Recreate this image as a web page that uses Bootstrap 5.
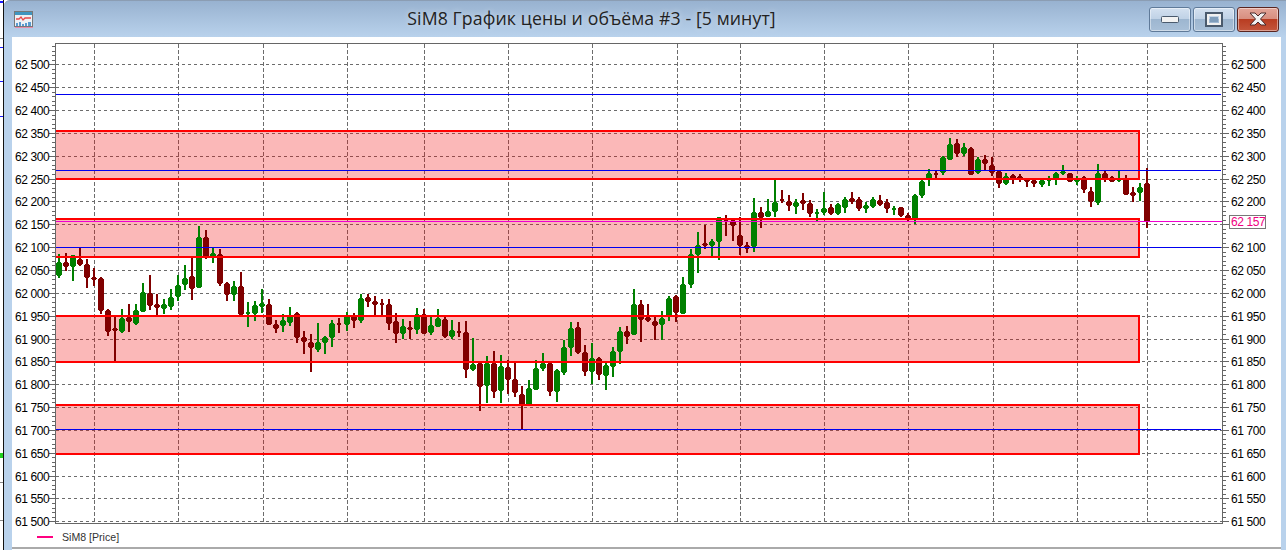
<!doctype html>
<html lang="ru">
<head>
<meta charset="utf-8">
<title>SiM8 График цены и объёма #3</title>
<link href="https://cdn.jsdelivr.net/npm/bootstrap@5.3.0/dist/css/bootstrap.min.css" rel="stylesheet">
<style>
html,body{height:550px;overflow:hidden;background:#fff}
.desk-strip{width:4px;flex:none;background:#fff;border-right:1px solid #111}
.desk-strip svg{display:block}
.win-frame{flex:1 1 auto;min-width:0;height:550px;background:#b9d2ec;border-top-left-radius:6px;padding:0 5px 0 8px}
.win-title{height:37px;margin:0 -5px 0 -8px;padding:0 7px 0 10px;background:linear-gradient(#98b2d0,#b9d2ec);border-top:1px solid #8b9db3;border-top-left-radius:6px}
.win-icon{width:20px;height:18px;flex:none;display:block;margin-top:2px}
.win-caption{font:17.7px/1 "Open Sans",sans-serif;color:#222;letter-spacing:.1px;margin-top:-1px;text-shadow:0 0 6px rgba(255,255,255,.55)}
.win-btns{gap:2px}
.win-btn{width:42px;height:25px;padding:0;border:1px solid #5f7a99;border-radius:3px;display:flex;align-items:center;justify-content:center;background:linear-gradient(#d4e1f0 0,#c0d2e6 46%,#9db6d0 50%,#a9c0d8 100%);box-shadow:inset 0 0 0 1px rgba(255,255,255,.45)}
.win-btn-close{border-color:#5a2520;background:linear-gradient(#e3a69a 0,#d88f80 46%,#b93d22 50%,#c4563c 100%)}
.win-btn svg{display:block}
.win-client{background:#fff;height:513px}
.plot-svg{display:block;width:1269px;height:490px}
.plot-svg rect,.plot-svg line,.plot-svg path{shape-rendering:crispEdges}
.axis-text{font:12px "Liberation Sans",sans-serif;letter-spacing:-.42px;fill:#000}
.price-text{font:12px "Liberation Sans",sans-serif;letter-spacing:-.42px;fill:#f0007f}
.legend-row{height:20px;padding-left:25px;font:10.6px "Liberation Sans",sans-serif;color:#333}
.legend-swatch{width:16px;height:2px;background:#ff0080;margin-right:9px}
.legend-end{height:3px;border-top:2px solid #aaa}
</style>
</head>
<body class="d-flex">
<div class="desk-strip">
<svg width="3" height="550"><rect width="3" height="2" y="1" fill="#1a1aff"/><rect y="47" width="3" height="1" fill="#1a1aff"/><rect y="81" width="3" height="1" fill="#1a1aff"/><rect y="38" width="3" height="1" fill="#888"/><rect y="116" width="3" height="1" fill="#1a1aff"/><rect y="453" width="3" height="5" fill="#20d020"/><rect y="482" width="3" height="1" fill="#888"/><rect y="520" width="3" height="1" fill="#888"/></svg>
</div>
<div class="win-frame d-flex flex-column">
  <div class="win-title d-flex align-items-center">
    <svg class="win-icon" viewBox="0 0 20 18"><rect x=".5" y=".5" width="18" height="15" fill="#eef1f5" stroke="#777"/><rect x="1" y="1" width="17" height="3" fill="#3f95c0"/><path d="M2 8h3l2-2 2 3 2-2h6" fill="none" stroke="#e8484a" stroke-width="1.3"/><path d="M2 12h2v3H2zM5 11h2v4H5zM8 13h2v2H8zM11 12h2v3h-2zM14 11h3v4h-3z" fill="#5a9bd0"/><rect x="1" y="16" width="18" height="1" fill="#e88aa8"/></svg>
    <div class="win-caption flex-grow-1 text-center">SiM8 График цены и объёма #3 - [5 минут]</div>
    <div class="d-flex win-btns">
      <button class="win-btn" type="button" aria-label="Свернуть"><svg width="18" height="7"><rect x=".5" y=".5" width="17" height="6" rx="1" fill="#f2f2f2" stroke="#4a5a6d"/></svg></button>
      <button class="win-btn" type="button" aria-label="Развернуть"><svg width="18" height="15"><rect x="1" y="1" width="16" height="13" fill="none" stroke="#4a5a6d" stroke-width="2"/><rect x="3" y="3" width="12" height="9" fill="none" stroke="#f0f0f0" stroke-width="2"/><rect x="5" y="5" width="8" height="5" fill="#7f9dbb"/></svg></button>
      <button class="win-btn win-btn-close" type="button" aria-label="Закрыть"><svg width="22" height="16" viewBox="0 0 22 16"><path d="M3 2h5l3 3 3-3h5l-5.500 6 5.500 6h-5l-3-3-3 3H3l5.500-6z" fill="#f1f1f1" stroke="#4a2a2a"/></svg></button>
    </div>
  </div>
  <div class="win-client d-flex flex-column">
    <svg class="plot-svg" viewBox="12 37 1269 490" id="plot"></svg>
    <div class="legend-row d-flex align-items-center"><span class="legend-swatch"></span><span>SiM8 [Price]</span></div>
    <div class="legend-end"></div>
  </div>
</div>
<script>
// hi, top, bottom, lo, colour of each candle, as measured on the chart: y = origin + v/3
var segs=[
[215,"26 117 140 182 188 g,47 114 140 155 168 r,68 120 121 155 197 g,90 98 131 150 152 r,110 133 146 189 218 r,131 160 187 195 213 r,152 186 190 287 296 r,173 283 284 350 362 r,194 305 340 347 438 r,215 282 308 350 353 g,236 267 305 320 350 r,257 267 284 326 329 g,278 204 232 290 290 g,299 180 235 272 284 r,320 238 266 278 300 r,341 252 268 282 296 g,362 222 247 275 284 g,383 180 209 245 258 g,404 150 188 209 224 g,425 128 182 221 254 r,446 34 65 218 218 g,467 45 66 127 131 r,488 98 113 125 143 g,509 102 117 206 212 r,530 201 203 239 257 r,551 198 212 239 257 g,572 171 212 300 300 r,593 260 290 297 335 g"],
[270,"0 93 106 131 152 g,0 57 100 111 129 g,0 87 102 165 165 r,0 150 162 177 188 r,0 132 150 167 185 g,0 111 135 160 167 g,0 126 128 205 218 r,0 183 201 216 251 r,0 192 215 233 305 r,0 159 217 240 245 g,0 198 201 219 251 g,0 150 160 204 231 g,0 144 158 164 188 r,0 125 135 164 183 g,0 129 134 153 174 r,0 72 83 152 158 g,0 72 81 95 110 r,0 78 92 105 135 r,0 87 99 105 135 r,0 87 101 162 180 r,0 129 154 192 218 r,0 147 168 192 207 g,0 153 171 180 207 r,0 114 132 180 192 g,0 117 132 192 192 r,0 141 166 190 194 g,0 117 144 171 171 g,0 141 148 201 204 r"],
[290,"0 90 120 141 147 g,0 96 123 129 141 r,0 93 125 240 264 r,0 144 223 240 243 g,0 219 220 291 363 r,0 198 220 288 339 g,0 183 219 306 324 r,0 195 229 303 339 g,0 210 230 270 312 r,0 219 268 309 321 r,0 288 312 345 417 r,0 270 294 345 345 g,0 210 233 300 300 g,0 189 220 237 243 g,0 219 220 306 318 r,0 237 240 306 336 g,0 150 170 249 255 g,0 96 114 174 198 g,0 96 110 189 192 r,0 165 186 246 258 r,0 159 204 246 282 g,0 201 204 255 270 r,0 219 225 258 300 g,0 171 183 231 261 g,0 111 123 186 222 g,0 108 122 140 162 r,0 -3 42 135 135 g,0 30 42 90 156 r"],
[170,"0 402 441 453 456 r,0 441 453 468 510 r,0 423 444 465 510 g,0 378 384 441 453 g,0 375 378 429 456 r,0 321 342 432 432 g,0 237 252 345 354 g,0 186 225 255 309 g,0 165 219 228 237 r,0 207 213 228 258 g,0 141 141 216 270 g,0 135 147 153 198 r,0 147 150 168 213 r,0 141 195 228 255 r,0 216 225 237 249 r,0 84 126 231 246 g,0 111 126 144 174 r,0 87 122 141 141 g,0 30 96 126 141 g,0 60 87 93 99 r,0 75 93 108 123 r,0 87 96 111 132 g,0 69 90 102 120 r,0 90 99 132 141 r,0 117 126 130 156 g"],
[130,"0 186 233 250 256 g,0 222 231 252 255 r,0 219 222 252 255 g,0 201 207 234 249 g,0 186 204 215 222 r,0 201 207 237 243 r,0 216 225 237 249 g,0 201 207 231 234 g,0 195 210 225 228 r,0 207 216 237 249 r,0 228 234 240 255 g,0 231 232 258 261 r,0 249 255 267 273 r,0 192 195 267 282 g,0 150 153 198 204 g,0 117 129 150 168 g,0 123 128 135 144 r,0 78 81 129 135 g,0 24 42 90 90 g,0 27 40 72 81 r,0 39 51 72 78 g,0 51 54 135 135 r,0 81 87 129 132 g,0 75 87 102 120 r,0 81 105 129 138 r,0 120 123 162 174 r,0 129 138 162 165 g,0 132 136 147 162 r,0 132 138 147 156 r,0 144 147 156 171 r,0 144 150 162 171 r,0 147 150 166 171 g,0 138 148 153 168 g,0 126 129 147 165 g,0 105 123 132 135 g,0 130 130 156 156 r,0 138 148 156 165 g,0 138 141 180 188 r,0 170 182 216 231 r,0 102 129 219 225 g,0 123 129 147 156 r,0 138 141 156 156 r,0 123 147 153 156 g,0 135 147 195 195 r,0 171 186 198 216 r,0 159 171 189 213 g,0 114 159 276 294 r"]
];
var candles=[];
segs.forEach(function(s){s[1].split(",").forEach(function(c){var p=c.split(" ");candles.push({h:s[0]+p[1]/3,t:s[0]+p[2]/3,b:s[0]+p[3]/3,l:s[0]+p[4]/3,c:p[5]});});});
function R(x,y,w,h,f){return '<rect x="'+x+'" y="'+y+'" width="'+w+'" height="'+h+'" fill="'+f+'"/>';}
function L(x1,y1,x2,y2,c,d){return '<line x1="'+x1+'" y1="'+y1+'" x2="'+x2+'" y2="'+y2+'" stroke="'+c+'"'+(d?' stroke-dasharray="'+d+'"':'')+'/>';}
var s='', GR='#6c6c6c', AX='#666';
var vx=[94,178,263,347,424,508,592,677,740,824,908,993,1077,1147];
vx.forEach(function(x){s+=L(x+.5,44,x+.5,523,GR,'4 2');});
for(var k=0;k<=20;k++){var y=Math.round(64.3+k*22.85);s+=L(56,y+.5,1222,y+.5,GR,'3 3');}
var zones=[[130,180],[218,258],[315,363],[404,455]];
zones.forEach(function(z){s+=R(56,z[0],1084,z[1]-z[0],'rgba(240,0,0,.28)');});
var step=(1146.8-58.7)/(candles.length-1);
candles.forEach(function(c,i){
 var cx=58.7+i*step, col=c.c=='g'?'#008000':'#800000';
 var wx=Math.round(cx-1), h=Math.round(c.h), l=Math.round(c.l), t=Math.round(c.t), b=Math.round(c.b);
 s+=R(wx,h,2,Math.max(l-h,1),col);
 s+=R(wx-1,t,4,Math.max(b-t,2),col);
 if(b-t>2){s+=R(wx-2,t+1,6,b-t-2,col);}
});
zones.forEach(function(z){s+='<path d="M56 '+(z[0]+1)+'H1139V'+(z[1]-1)+'H56" fill="none" stroke="#f00" stroke-width="2"/>';});
[94,170,247,429].forEach(function(y){s+=L(56,y+.5,1221,y+.5,'#0000f0');});
s+=L(56,221.5,1222,221.5,'#f000d0');
s+='<rect x="55.500" y="43.500" width="1167" height="480" fill="none" stroke="'+AX+'"/>';
for(var m=-4;m<=100;m++){var yy=Math.round(64.3+m*4.57);if(yy<44||yy>523)continue;var major=(m%5===0);
 s+=L(major?49:52,yy+.5,55,yy+.5,AX);s+=L(1223,yy+.5,major?1229:1226,yy+.5,AX);}
for(var j=0;j<=20;j++){var v=62500-j*50,txt=(''+v).slice(0,2)+' '+(''+v).slice(2),ty=Math.round(64.3+j*22.85)+4.5;
 s+='<text class="axis-text" x="15" y="'+ty+'">'+txt+'</text><text class="axis-text" x="1231" y="'+ty+'">'+txt+'</text>';}
s+='<rect x="1229.500" y="215.500" width="36" height="13" fill="#fff" stroke="#777"/><text class="price-text" x="1231" y="226">62 157</text>';
document.getElementById('plot').innerHTML=s;
</script>
</body>
</html>
